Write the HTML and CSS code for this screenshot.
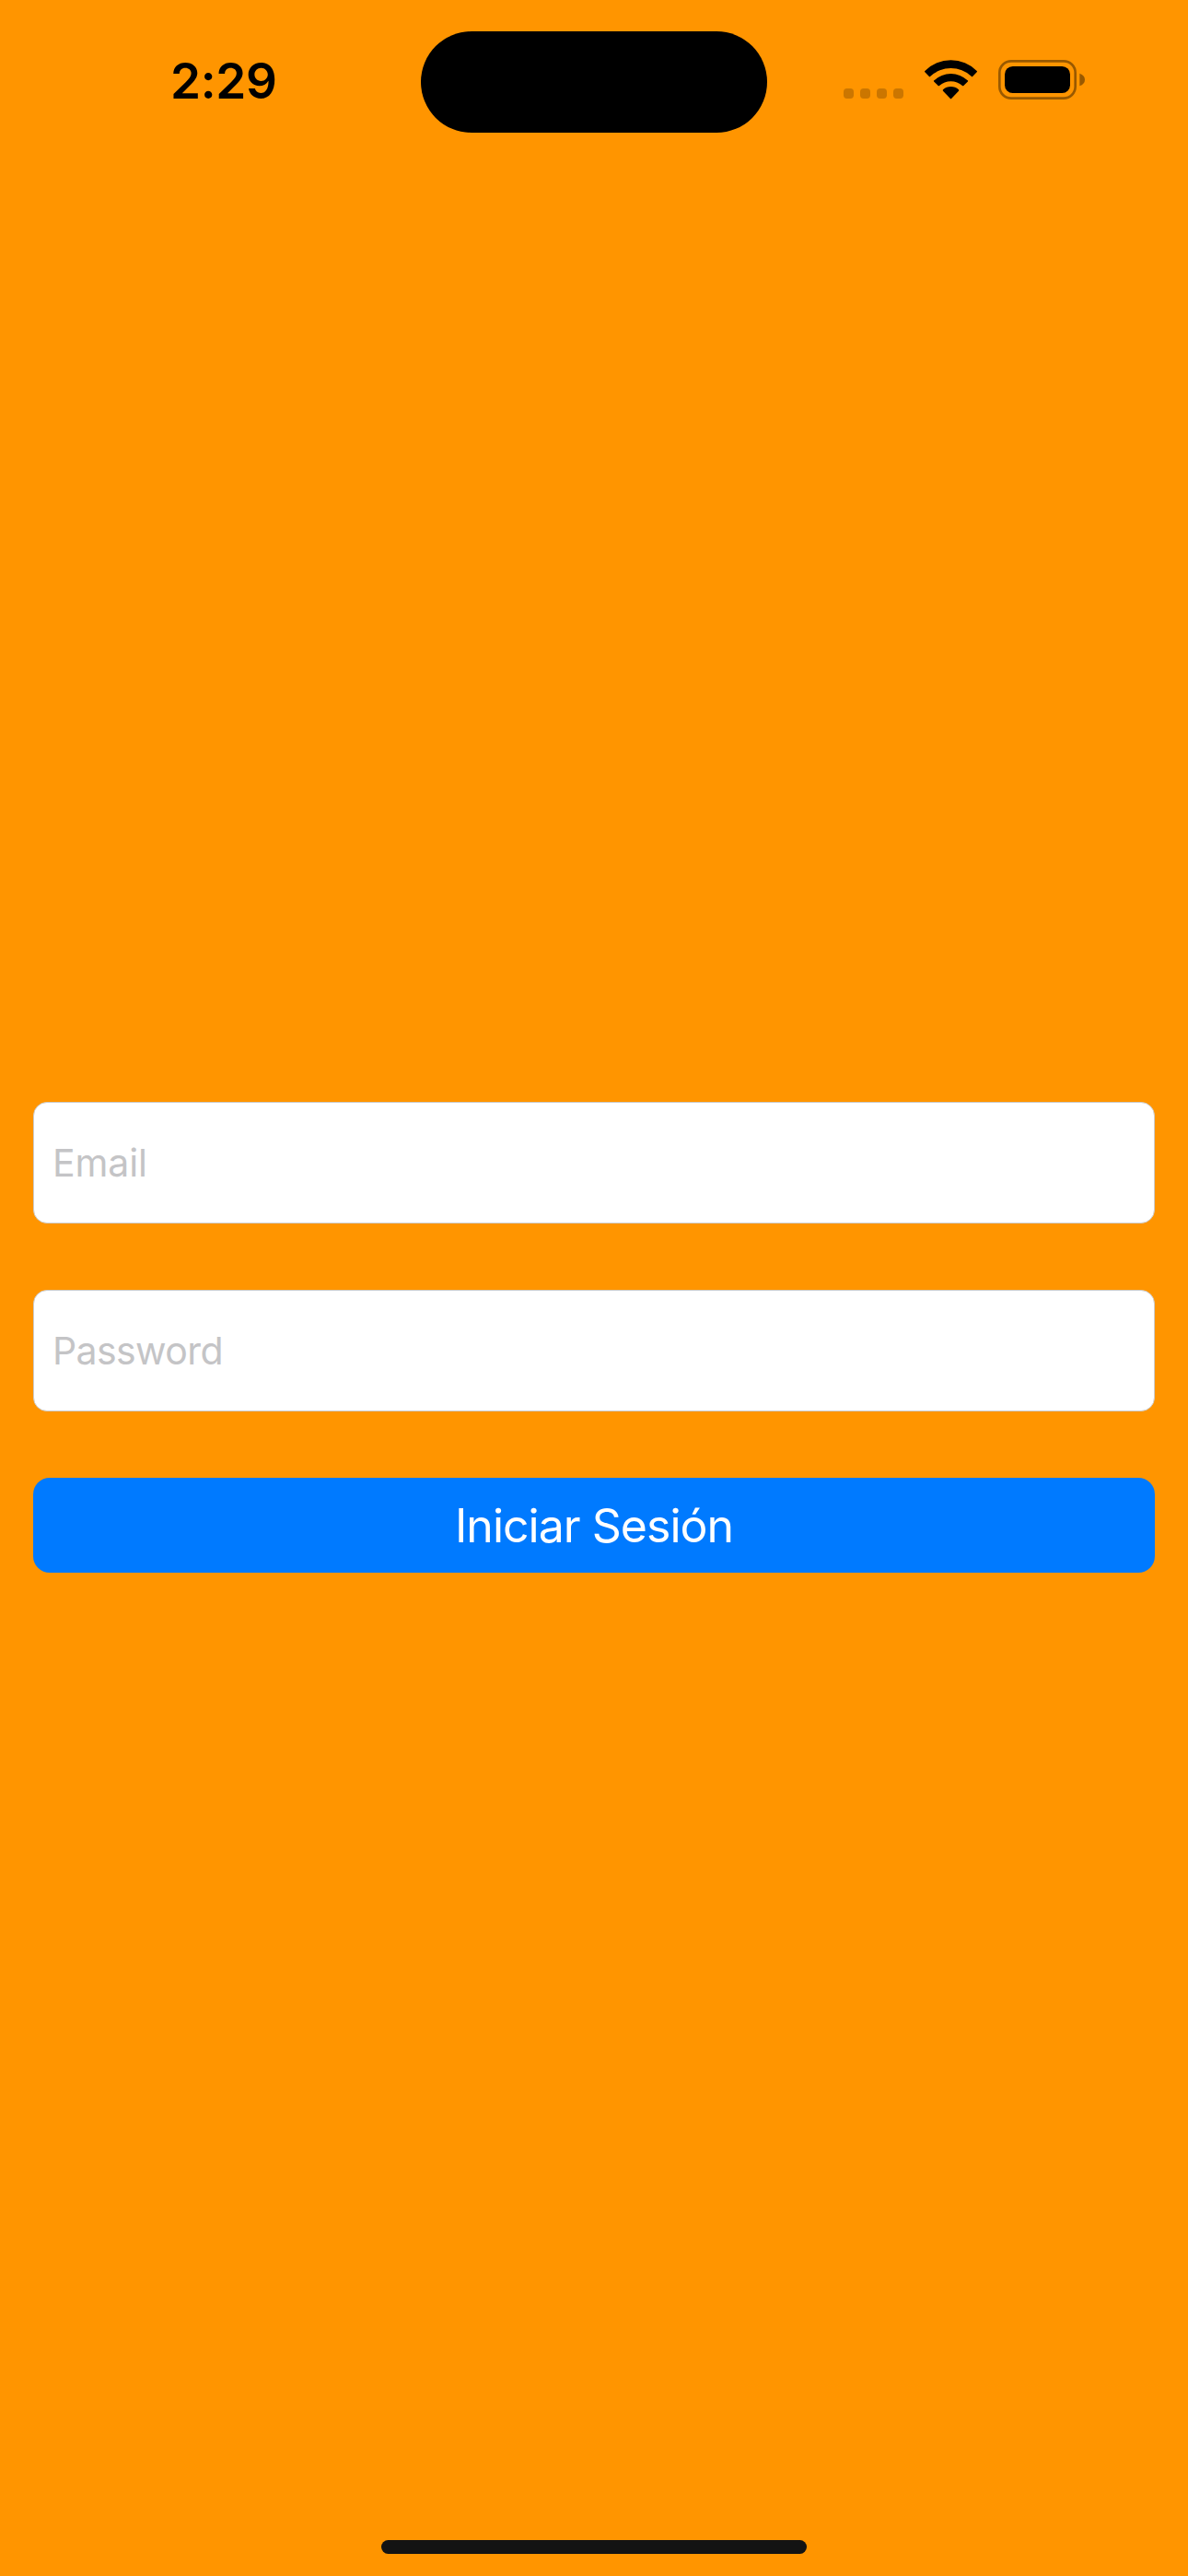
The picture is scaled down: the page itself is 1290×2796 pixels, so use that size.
FILE: index.html
```html
<!DOCTYPE html>
<html lang="es">
<head>
<meta charset="utf-8">
<title>Iniciar Sesión</title>
<link rel="stylesheet" href="styles.css">
</head>
<body>
<div class="screen">
  <header class="status-bar">
    <div class="clock">2:29</div>
    <div class="island"></div>
    <div class="indicators">
      <svg class="cellular" viewBox="0 0 195 33"><rect width="33" height="33" rx="11"/><rect x="54" width="33" height="33" rx="11"/><rect x="108" width="33" height="33" rx="11"/><rect x="162" width="33" height="33" rx="11"/></svg>
      <svg class="wifi" viewBox="342 75 174 129">
        <path d="M343 111A119.500 119.500 0 0 1 512 111Q514 113 512 115L499 128Q497 131 494 128A99 99 0 0 0 361 128Q358 131 356 128L343 115Q341 113 343 111Z"/>
        <path d="M373 142A78.500 78.500 0 0 1 482 142Q485 144 482 146L469 159Q467 161 465 159A57 57 0 0 0 390 159Q388 161 386 159L373 146Q370 144 373 142Z"/>
        <path d="M402 172A38 38 0 0 1 453 172Q455 174 453 176L430 200Q427.500 203 425 200L402 176Q400 174 402 172Z"/>
      </svg>
      <svg class="battery" viewBox="582 75 282 129">
        <rect class="shell" x="586" y="79" width="247" height="121" rx="38"/>
        <rect x="603" y="96" width="213" height="87" rx="26"/>
        <path class="tip" d="M847 119Q864 125 864 139.500Q864 154 847 160Z"/>
      </svg>
    </div>
  </header>
  <main class="login">
    <input class="field" type="email" placeholder="Email" aria-label="Email">
    <input class="field field-password" type="password" placeholder="Password" aria-label="Password">
    <button class="submit" type="button">Iniciar Sesión</button>
  </main>
  <footer class="home"><div class="home-bar"></div></footer>
</div>
</body>
</html>
```
FILE: styles.css
```css
* { box-sizing: border-box; }

body {
  margin: 0;
  background: #ff9500;
  font-family: Inter, "Liberation Sans", sans-serif;
}

.screen {
  display: flex;
  flex-direction: column;
  width: 1290px;
  height: 2796px;
}

.status-bar {
  display: grid;
  grid-template-columns: 457px 376px 1fr;
  height: 177px;
  padding-top: 34px;
}

.clock {
  padding: 22px 0 0 185px;
  font-size: 53px;
  font-weight: 570;
  line-height: 64px;
  letter-spacing: -0.3px;
}

.island {
  height: 110px;
  border-radius: 55px;
  background: #000;
}

.indicators {
  display: flex;
  align-items: flex-end;
  height: 74px;
  padding-left: 83px;
}

.cellular { width: 65px; height: 11px; margin: 0 23px 1px 0; opacity: .2; }
.wifi { width: 58px; height: 43px; margin-right: 22px; }
.battery { width: 94px; height: 43px; }
.shell { fill: none; stroke: #000; stroke-width: 8; opacity: .4; }
.tip { opacity: .4; }

.login {
  display: flex;
  flex: 1;
  flex-direction: column;
  padding: 1019px 36px 0;
}

.field {
  height: 132px;
  margin: 0 0 72px;
  padding: 0 20px;
  border: 1px solid #cccccc;
  border-radius: 15px;
  background: #fff;
  font: 400 41px Inter, "Liberation Sans", sans-serif;
  letter-spacing: -0.1px;
}

.field-password { letter-spacing: -0.6px; }

.field::placeholder { color: #c4c4c6; opacity: 1; }

.submit {
  height: 103px;
  padding: 0;
  border: 0;
  border-radius: 18px;
  background: #007aff;
  color: #fff;
  font: 400 50px Inter, "Liberation Sans", sans-serif;
  letter-spacing: -0.98px;
}

.home {
  display: flex;
  justify-content: center;
  height: 39px;
}

.home-bar {
  width: 462px;
  height: 15px;
  border-radius: 8px;
  background: #131313;
}
```
